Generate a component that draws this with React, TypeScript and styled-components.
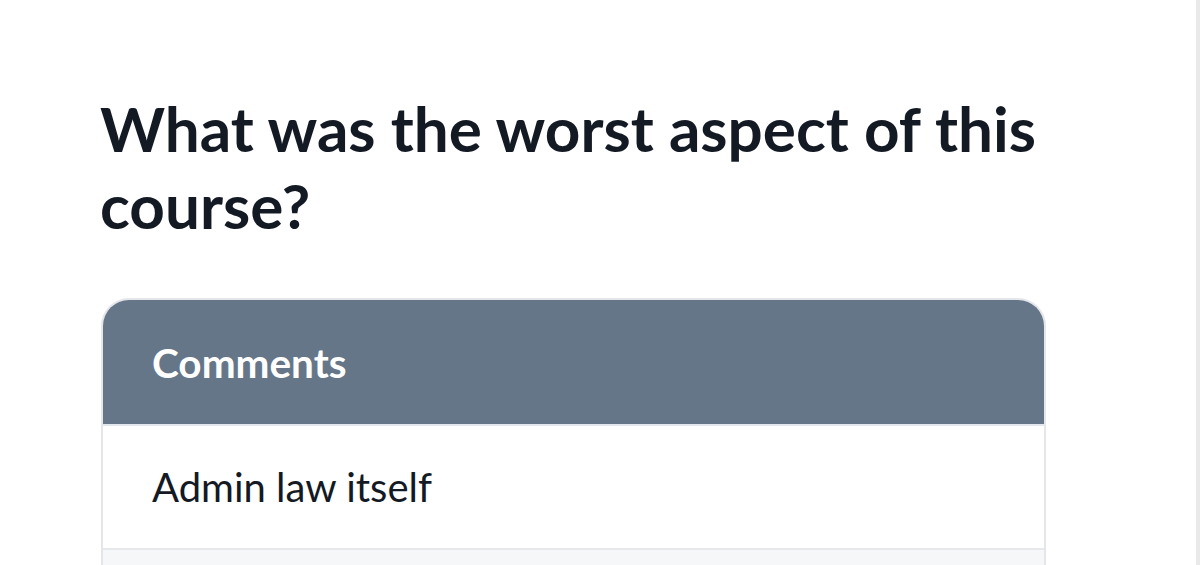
import React from "react";
import styled, { createGlobalStyle } from "styled-components";

const Global = createGlobalStyle`
  html, body { margin: 0; padding: 0; background: #ffffff; }
  body { font-family: Lato, "Noto Sans", sans-serif; }
`;

const Page = styled.div`
  width: 1200px;
  height: 565px;
  box-sizing: border-box;
  overflow: hidden;
  display: flex;
`;

const Main = styled.main`
  flex: 1;
  padding: 90px 0 0 100px;
  box-sizing: border-box;
  border-right: 4px solid #e9e9ea;
`;

const Title = styled.h1`
  margin: 0 0 54px 0;
  width: 960px;
  font-family: Lato, sans-serif;
  font-weight: 700;
  font-size: 62px;
  line-height: 77px;
  color: #141a24;
`;

const Card = styled.section`
  box-sizing: border-box;
  width: 945px;
  margin-left: 1px;
  border: 2px solid #e4e6ea;
  border-bottom: none;
  border-radius: 28px 28px 0 0;
  overflow: hidden;
`;

const Header = styled.div`
  background: #667689;
  height: 124px;
  display: flex;
  align-items: center;
  padding-left: 49px;
  color: #ffffff;
  font-weight: 700;
  font-size: 40.5px;
  border-bottom: 2px solid #e3e8ef;
`;

const Row = styled.div<{ $shade?: boolean }>`
  height: 122px;
  display: flex;
  align-items: center;
  padding-left: 49px;
  background: ${(p) => (p.$shade ? "#f6f7f8" : "#ffffff")};
  border-bottom: 2px solid #e6e8ec;
  color: #141a24;
  font-weight: 400;
  font-size: 40px;
`;

export default function App() {
  return (
    <Page>
      <Global />
      <Main>
        <Title>What was the worst aspect of this course?</Title>
        <Card>
          <Header>Comments</Header>
          <Row>Admin law itself</Row>
          <Row $shade> </Row>
        </Card>
      </Main>
    </Page>
  );
}
